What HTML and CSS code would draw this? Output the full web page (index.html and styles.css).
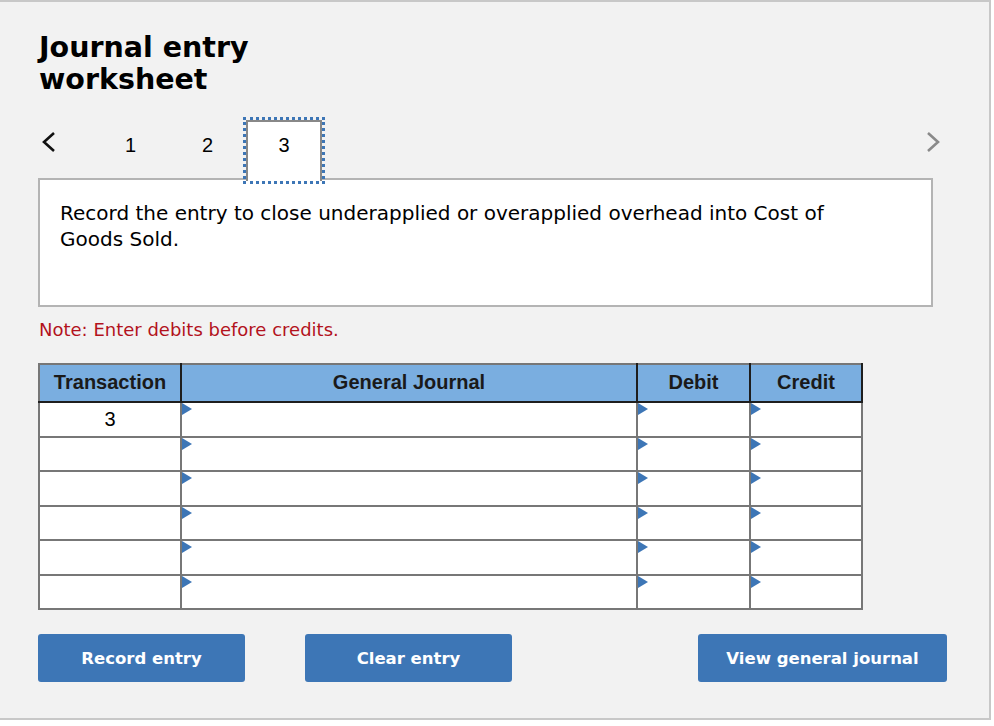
FILE: index.html
```html
<!DOCTYPE html>
<html>
<head>
<meta charset="utf-8">
<link rel="stylesheet" href="styles.css">
</head>
<body>
<div class="frame">
  <h1 class="title">Journal entry<br>worksheet</h1>
  <div class="tabs">
    <span class="arrow prev"><svg width="16" height="22" viewBox="0 0 16 22"><path d="M13 2 L3 11 L13 20" fill="none" stroke="#111" stroke-width="2.6"/></svg></span>
    <span class="tab">1</span>
    <span class="tab">2</span>
    <span class="tab current">3</span>
    <span class="spacer"></span>
    <span class="arrow next"><svg width="16" height="22" viewBox="0 0 16 22"><path d="M3 2 L13 11 L3 20" fill="none" stroke="#8a8a8a" stroke-width="2.6"/></svg></span>
  </div>
  <div class="prompt">Record the entry to close underapplied or overapplied overhead into Cost of Goods Sold.</div>
  <p class="note">Note: Enter debits before credits.</p>
  <table class="journal">
    <thead>
      <tr><th class="c-tr">Transaction</th><th class="c-gj">General Journal</th><th class="c-dr">Debit</th><th class="c-cr">Credit</th></tr>
    </thead>
    <tbody>
      <tr><td class="num">3</td><td class="dd"></td><td class="dd"></td><td class="dd"></td></tr>
      <tr><td class="num"></td><td class="dd"></td><td class="dd"></td><td class="dd"></td></tr>
      <tr><td class="num"></td><td class="dd"></td><td class="dd"></td><td class="dd"></td></tr>
      <tr><td class="num"></td><td class="dd"></td><td class="dd"></td><td class="dd"></td></tr>
      <tr><td class="num"></td><td class="dd"></td><td class="dd"></td><td class="dd"></td></tr>
      <tr><td class="num"></td><td class="dd"></td><td class="dd"></td><td class="dd"></td></tr>
    </tbody>
  </table>
  <div class="actions">
    <button class="btn b-record">Record entry</button>
    <button class="btn b-clear">Clear entry</button>
    <button class="btn b-view">View general journal</button>
  </div>
</div>
</body>
</html>
```
FILE: styles.css
```css
html, body { margin: 0; padding: 0; background: #fff; }
.frame {
  box-sizing: border-box;
  width: 991px;
  height: 720px;
  background: #f2f2f2;
  border-top: 2px solid #c8c8c8;
  border-right: 2px solid #c8c8c8;
  border-bottom: 2px solid #c8c8c8;
  padding: 30px 0 0 38px;
  font-family: "DejaVu Sans", Verdana, sans-serif;
  color: #000;
}
.title {
  margin: 0 0 0 1px;
  font-size: 28.5px;
  line-height: 32px;
  font-weight: bold;
}
.tabs {
  display: flex;
  align-items: flex-start;
  height: 61px;
  margin-top: 24px;
  width: 903px;
  font-family: "Liberation Sans", Arial, sans-serif;
  font-size: 20px;
}
.arrow { display: flex; align-items: center; height: 44px; }
.prev { width: 51px; padding-left: 3px; }
.tab {
  box-sizing: border-box;
  display: flex;
  justify-content: center;
  align-items: center;
  height: 50px;
  width: 77px;
}
.current {
  width: 76px;
  height: 61px;
  background: #fff;
  border: 2px solid #888;
  border-bottom: none;
  outline: 3px dotted #3d76b6;
  padding-bottom: 13px;
  position: relative;
  z-index: 1;
}
.spacer { flex: 1; }
.next { width: 16px; }
.prompt {
  box-sizing: border-box;
  width: 895px;
  height: 129px;
  background: #fff;
  border: 2px solid #b4b4b4;
  padding: 20px 60px 0 20px;
  font-size: 20px;
  line-height: 26px;
  margin-top: -3px;
}
.note {
  margin: 12px 0 0 1px;
  color: #b3121d;
  font-size: 18px;
  line-height: 22px;
}
.journal {
  margin-top: 22px;
  border-collapse: collapse;
  background: #fff;
  font-family: "Liberation Sans", Arial, sans-serif;
  font-size: 20px;
  table-layout: fixed;
  width: 823px;
}
.journal th {
  background: #7aaee0;
  color: #1a1a1a;
  font-weight: bold;
  height: 34px;
  padding: 0 0 2px 0;
  border: 2px solid #1e1e1e;
  border-top-color: #777;
  text-align: center;
}
.journal th.c-tr { border-left-color: #777; }
.c-tr { width: 140px; }
.c-gj { width: 454px; }
.c-dr { width: 111px; }
.c-cr { width: 110px; }
.journal td {
  border: 2px solid #777;
  height: 32.5px;
  padding: 0;
  position: relative;
}
.journal td.num { text-align: center; vertical-align: middle; }
.journal td.dd::before {
  content: "";
  position: absolute;
  left: 0;
  top: 0;
  border-left: 10px solid #3d76b6;
  border-top: 6px solid transparent;
  border-bottom: 6px solid transparent;
}
.actions {
  display: flex;
  margin-top: 24px;
  width: 909px;
}
.btn {
  height: 48px;
  border: none;
  border-radius: 3px;
  background: #3d76b6;
  color: #fff;
  font-family: "DejaVu Sans", Verdana, sans-serif;
  font-weight: bold;
  font-size: 16.5px;
  padding: 0;
}
.b-record { width: 207px; }
.b-clear { width: 207px; margin-left: 60px; }
.b-view { width: 249px; margin-left: auto; }
```
